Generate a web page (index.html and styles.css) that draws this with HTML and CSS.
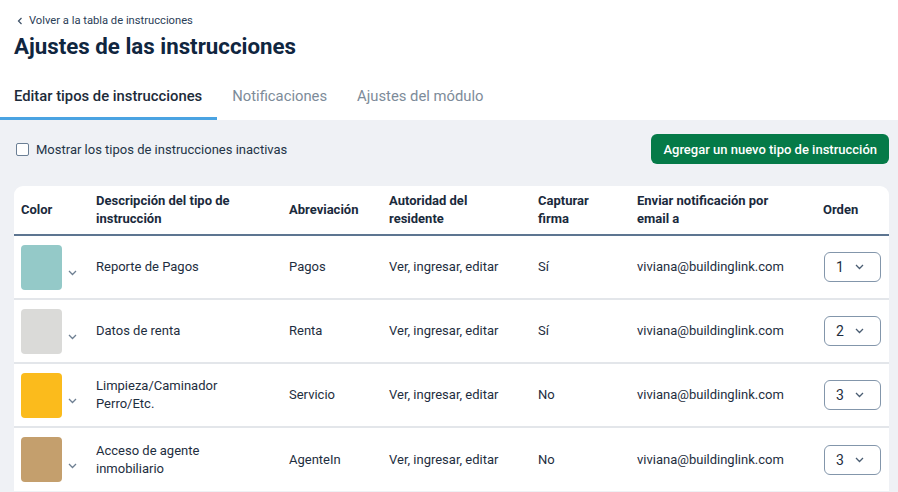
FILE: index.html
```html
<!DOCTYPE html>
<html lang="es">
<head>
<meta charset="utf-8">
<link rel="stylesheet" href="styles.css">
</head>
<body>
<header class="top">
  <a class="back" href="#"><svg width="8" height="8" viewBox="0 0 8 8"><path d="M5.5 1 L2.5 4 L5.5 7" fill="none" stroke="#3b4f66" stroke-width="1.2"/></svg>Volver a la tabla de instrucciones</a>
  <h1 class="title">Ajustes de las instrucciones</h1>
  <nav class="tabs">
    <span class="tab active">Editar tipos de instrucciones</span>
    <span class="tab">Notificaciones</span>
    <span class="tab">Ajustes del módulo</span>
  </nav>
</header>
<main class="content">
  <div class="toolbar">
    <label class="check"><span class="box"></span>Mostrar los tipos de instrucciones inactivas</label>
    <button class="btn">Agregar un nuevo tipo de instrucción</button>
  </div>
  <div class="card">
    <table class="tbl">
      <colgroup>
        <col class="c1"><col class="c2"><col class="c3"><col class="c4"><col class="c5"><col class="c6"><col class="c7">
      </colgroup>
      <thead>
        <tr>
          <th>Color</th>
          <th>Descripción del tipo de instrucción</th>
          <th>Abreviación</th>
          <th>Autoridad del residente</th>
          <th>Capturar firma</th>
          <th>Enviar notificación por email a</th>
          <th>Orden</th>
        </tr>
      </thead>
      <tbody>
        <tr>
          <td class="cc"><div class="color"><span class="sw sw-teal"></span><svg class="chev" width="9" height="6" viewBox="0 0 9 6"><path d="M1 1 L4.5 4.5 L8 1" fill="none" stroke="#6e7f92" stroke-width="1.3"/></svg></div></td>
          <td>Reporte de Pagos</td>
          <td>Pagos</td>
          <td>Ver, ingresar, editar</td>
          <td>Sí</td>
          <td>viviana@buildinglink.com</td>
          <td><div class="sel">1<svg width="9" height="6" viewBox="0 0 9 6"><path d="M1 1 L4.5 4.5 L8 1" fill="none" stroke="#4a5d72" stroke-width="1.3"/></svg></div></td>
        </tr>
        <tr>
          <td class="cc"><div class="color"><span class="sw sw-gray"></span><svg class="chev" width="9" height="6" viewBox="0 0 9 6"><path d="M1 1 L4.5 4.5 L8 1" fill="none" stroke="#6e7f92" stroke-width="1.3"/></svg></div></td>
          <td>Datos de renta</td>
          <td>Renta</td>
          <td>Ver, ingresar, editar</td>
          <td>Sí</td>
          <td>viviana@buildinglink.com</td>
          <td><div class="sel">2<svg width="9" height="6" viewBox="0 0 9 6"><path d="M1 1 L4.5 4.5 L8 1" fill="none" stroke="#4a5d72" stroke-width="1.3"/></svg></div></td>
        </tr>
        <tr>
          <td class="cc"><div class="color"><span class="sw sw-yellow"></span><svg class="chev" width="9" height="6" viewBox="0 0 9 6"><path d="M1 1 L4.5 4.5 L8 1" fill="none" stroke="#6e7f92" stroke-width="1.3"/></svg></div></td>
          <td>Limpieza/Caminador Perro/Etc.</td>
          <td>Servicio</td>
          <td>Ver, ingresar, editar</td>
          <td>No</td>
          <td>viviana@buildinglink.com</td>
          <td><div class="sel">3<svg width="9" height="6" viewBox="0 0 9 6"><path d="M1 1 L4.5 4.5 L8 1" fill="none" stroke="#4a5d72" stroke-width="1.3"/></svg></div></td>
        </tr>
        <tr>
          <td class="cc"><div class="color"><span class="sw sw-tan"></span><svg class="chev" width="9" height="6" viewBox="0 0 9 6"><path d="M1 1 L4.5 4.5 L8 1" fill="none" stroke="#6e7f92" stroke-width="1.3"/></svg></div></td>
          <td>Acceso de agente inmobiliario</td>
          <td>AgenteIn</td>
          <td>Ver, ingresar, editar</td>
          <td>No</td>
          <td>viviana@buildinglink.com</td>
          <td><div class="sel">3<svg width="9" height="6" viewBox="0 0 9 6"><path d="M1 1 L4.5 4.5 L8 1" fill="none" stroke="#4a5d72" stroke-width="1.3"/></svg></div></td>
        </tr>
      </tbody>
    </table>
  </div>
</main>
</body>
</html>
```
FILE: styles.css
```css
* { box-sizing: border-box; }
html, body { margin: 0; padding: 0; }
body {
  font-family: Roboto, "Liberation Sans", sans-serif;
  color: #1d2b3a;
  background: #eff1f5;
  width: 898px;
  height: 492px;
  overflow: hidden;
}
.top {
  background: #fff;
  padding: 14px 0 0 0;
}
.back {
  display: flex;
  align-items: center;
  gap: 5px;
  margin-left: 16px;
  font-size: 11.2px;
  line-height: 14px;
  color: #2b4058;
  text-decoration: none;
}
.title {
  margin: 5px 0 0 14px;
  font-size: 22.3px;
  line-height: 26px;
  font-weight: 700;
  color: #10263f;
}
.tabs {
  display: flex;
  margin-top: 28px;
}
.tab {
  font-size: 14.8px;
  line-height: 18px;
  font-weight: 400;
  color: #7d8b99;
  padding: 0 15px 12px 15px;
  border-bottom: 3px solid transparent;
}
.tab.active {
  font-weight: 500;
  color: #1d2b3a;
  padding-left: 14px;
  border-bottom-color: #4aa3e2;
}
.content {
  padding: 0 9px 0 14px;
}
.toolbar {
  display: flex;
  align-items: center;
  justify-content: space-between;
  height: 30px;
  margin: 14px 0 22px 0;
}
.check {
  display: flex;
  align-items: center;
  gap: 7px;
  font-size: 13px;
  color: #233447;
  margin-left: 2px;
}
.box {
  width: 13px;
  height: 13px;
  border: 1.5px solid #6b7f95;
  border-radius: 2px;
  background: #fff;
}
.btn {
  font-family: Roboto, "Liberation Sans", sans-serif;
  background: #057a48;
  color: #fff;
  border: 0;
  border-radius: 6px;
  font-size: 13px;
  font-weight: 500;
  height: 30px;
  padding: 0 12px;
}
.card {
  background: #fff;
  border-radius: 9px 9px 0 0;
}
.tbl {
  width: 875px;
  border-collapse: collapse;
  table-layout: fixed;
}
.c1 { width: 75px; }
.c2 { width: 193px; }
.c3 { width: 100px; }
.c4 { width: 149px; }
.c5 { width: 99px; }
.c6 { width: 186px; }
.c7 { width: 73px; }
th {
  text-align: left;
  font-size: 13px;
  line-height: 18px;
  font-weight: 700;
  color: #1a2a3c;
  padding: 0 14px 1px 7px;
  height: 49px;
  border-bottom: 2px solid #5d7591;
  vertical-align: middle;
}
td {
  font-size: 13px;
  line-height: 18px;
  color: #1e2e40;
  padding: 0 14px 0 7px;
  height: 64px;
  border-bottom: 2px solid #e3e6ea;
  vertical-align: middle;
}
td.cc { padding-right: 0; }
tbody tr:last-child td { border-bottom: 0; }
.color {
  display: flex;
  align-items: center;
  gap: 6px;
}
.sw {
  flex-shrink: 0;
  width: 41px;
  height: 45px;
  border-radius: 4px;
  display: block;
}
.chev { flex-shrink: 0; margin-top: 12px; }
.sw-teal { background: #94c9c8; }
.sw-gray { background: #dadad8; }
.sw-yellow { background: #fbbb1c; }
.sw-tan { background: #c49f6d; }
.sel {
  width: 57px;
  height: 30px;
  border: 1px solid #8396ab;
  border-radius: 6px;
  display: flex;
  align-items: center;
  gap: 11px;
  padding-left: 11px;
  margin-left: 1px;
  font-size: 14px;
  color: #1e2e40;
}
```
